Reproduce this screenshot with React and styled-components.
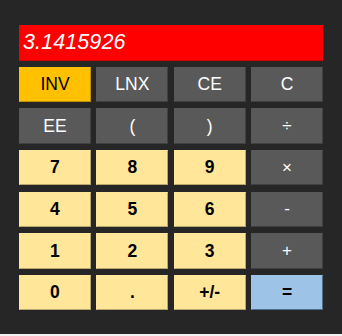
import React from 'react';
import styled, { createGlobalStyle } from 'styled-components';

const GlobalStyle = createGlobalStyle`
  html, body {
    margin: 0;
    padding: 0;
    background: #f0f0f0;
  }
`;

const Frame = styled("main")`
  box-sizing: border-box;
  width: 342px;
  height: 334px;
  background: #262626;
  padding: 25px 19px 0;
  display: flex;
  flex-direction: column;
  gap: 5.7px;
  font-family: "Liberation Sans", Arial, sans-serif;
`;

const Display = styled("div")`
  box-sizing: border-box;
  height: 36px;
  background: #ff0000;
  border-bottom: 1px solid #d80000;
  color: #ffffff;
  font-style: italic;
  font-size: 21.5px;
  display: flex;
  align-items: center;
  padding-left: 4px;
  letter-spacing: 0.1px;
`;

const Keypad = styled("div")`
  display: grid;
  grid-template-columns: repeat(4, 1fr);
  grid-auto-rows: 35.4px;
  column-gap: 5.4px;
  row-gap: 6.27px;
`;

const palette = {
  inv: { bg: "#ffc000", border: "#bf9000", color: "#000000", weight: 400 },
  fn: { bg: "#595959", border: "#404040", color: "#ffffff", weight: 400 },
  op: { bg: "#595959", border: "#404040", color: "#ffffff", weight: 400 },
  num: { bg: "#ffe699", border: "#b8a66c", color: "#000000", weight: 700 },
  eq: { bg: "#9dc3e6", border: "#4f6f8c", color: "#000000", weight: 700 },
};

const Key = styled("button")`
  box-sizing: border-box;
  margin: 0;
  padding: 0;
  border: 1px solid ${p => palette[p.$kind].border};
  border-top-color: ${p => palette[p.$kind].bg};
  border-left-color: ${p => palette[p.$kind].bg};
  background: ${p => palette[p.$kind].bg};
  color: ${p => palette[p.$kind].color};
  font-family: inherit;
  font-weight: ${p => palette[p.$kind].weight};
  font-size: ${p => (p.$kind === "op" ? "17px" : "17.5px")};
  display: flex;
  align-items: center;
  justify-content: center;
  cursor: pointer;
`;

const keys = [
  ["INV", "inv"], ["LNX", "fn"], ["CE", "fn"], ["C", "fn"],
  ["EE", "fn"], ["(", "fn"], [")", "fn"], ["÷", "op"],
  ["7", "num"], ["8", "num"], ["9", "num"], ["×", "op"],
  ["4", "num"], ["5", "num"], ["6", "num"], ["-", "op"],
  ["1", "num"], ["2", "num"], ["3", "num"], ["+", "op"],
  ["0", "num"], [".", "num"], ["+/-", "num"], ["=", "eq"],
];

export default () => (
  <>
    <GlobalStyle />
    <Frame>
      <Display>3.1415926</Display>
      <Keypad>
        {keys.map(([label, kind]) => (
          <Key key={label} $kind={kind}>{label}</Key>
        ))}
      </Keypad>
    </Frame>
  </>
);
